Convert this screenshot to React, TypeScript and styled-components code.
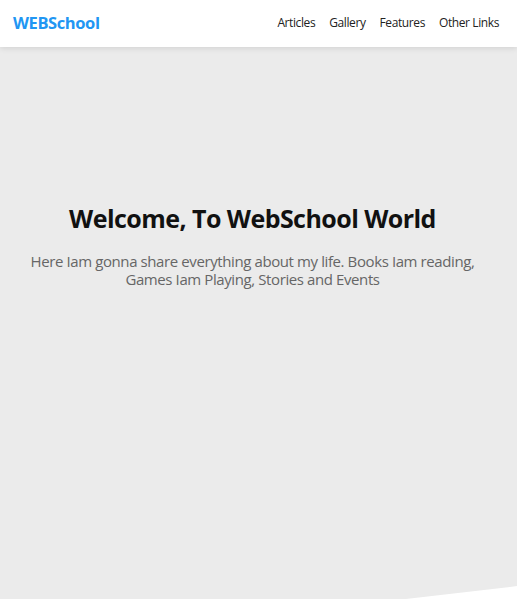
import React from "react";
import styled, { createGlobalStyle } from "styled-components";

const Global = createGlobalStyle`
  html, body { margin: 0; padding: 0; background: #fff; }
  body { font-family: "Open Sans", "Noto Sans", sans-serif; }
  * { box-sizing: border-box; }
`;

const Header = styled.header`
  position: relative;
  z-index: 2;
  height: 47px;
  display: flex;
  align-items: center;
  justify-content: space-between;
  padding: 0 18px 3px 13px;
  background: #fff;
  box-shadow: 0 1px 6px rgba(0, 0, 0, 0.12);
`;

const Logo = styled.a`
  color: #2196f3;
  font-weight: 700;
  font-size: 16.5px;
  letter-spacing: -0.4px;
  text-decoration: none;
`;

const Nav = styled.nav`
  display: flex;
  gap: 14px;
`;

const NavLink = styled.a`
  color: #222;
  font-size: 12px;
  text-decoration: none;
  letter-spacing: -0.4px;
`;

const Hero = styled.section`
  height: 100vh;
  background: #ebebeb;
  clip-path: polygon(0 0, 100% 0, 100% 90%, 0 100%);
  display: flex;
  flex-direction: column;
  align-items: center;
  padding: 154px 36px 0 24px;
  text-align: center;
`;

const Title = styled.h1`
  margin: 0;
  font-size: 25px;
  font-weight: 700;
  color: #111;
  letter-spacing: -0.55px;
`;

const Lead = styled.p`
  margin: 17px 0 0;
  font-size: 15px;
  line-height: 18px;
  color: #666;
  max-width: 460px;
  letter-spacing: -0.4px;
`;

export default function App() {
  return (
    <>
      <Global />
      <Header>
        <Logo href="#">WEBSchool</Logo>
        <Nav>
          <NavLink href="#">Articles</NavLink>
          <NavLink href="#">Gallery</NavLink>
          <NavLink href="#">Features</NavLink>
          <NavLink href="#">Other Links</NavLink>
        </Nav>
      </Header>
      <Hero>
        <Title>Welcome, To WebSchool World</Title>
        <Lead>
          Here Iam gonna share everything about my life. Books Iam reading,
          Games Iam Playing, Stories and Events
        </Lead>
      </Hero>
    </>
  );
}
